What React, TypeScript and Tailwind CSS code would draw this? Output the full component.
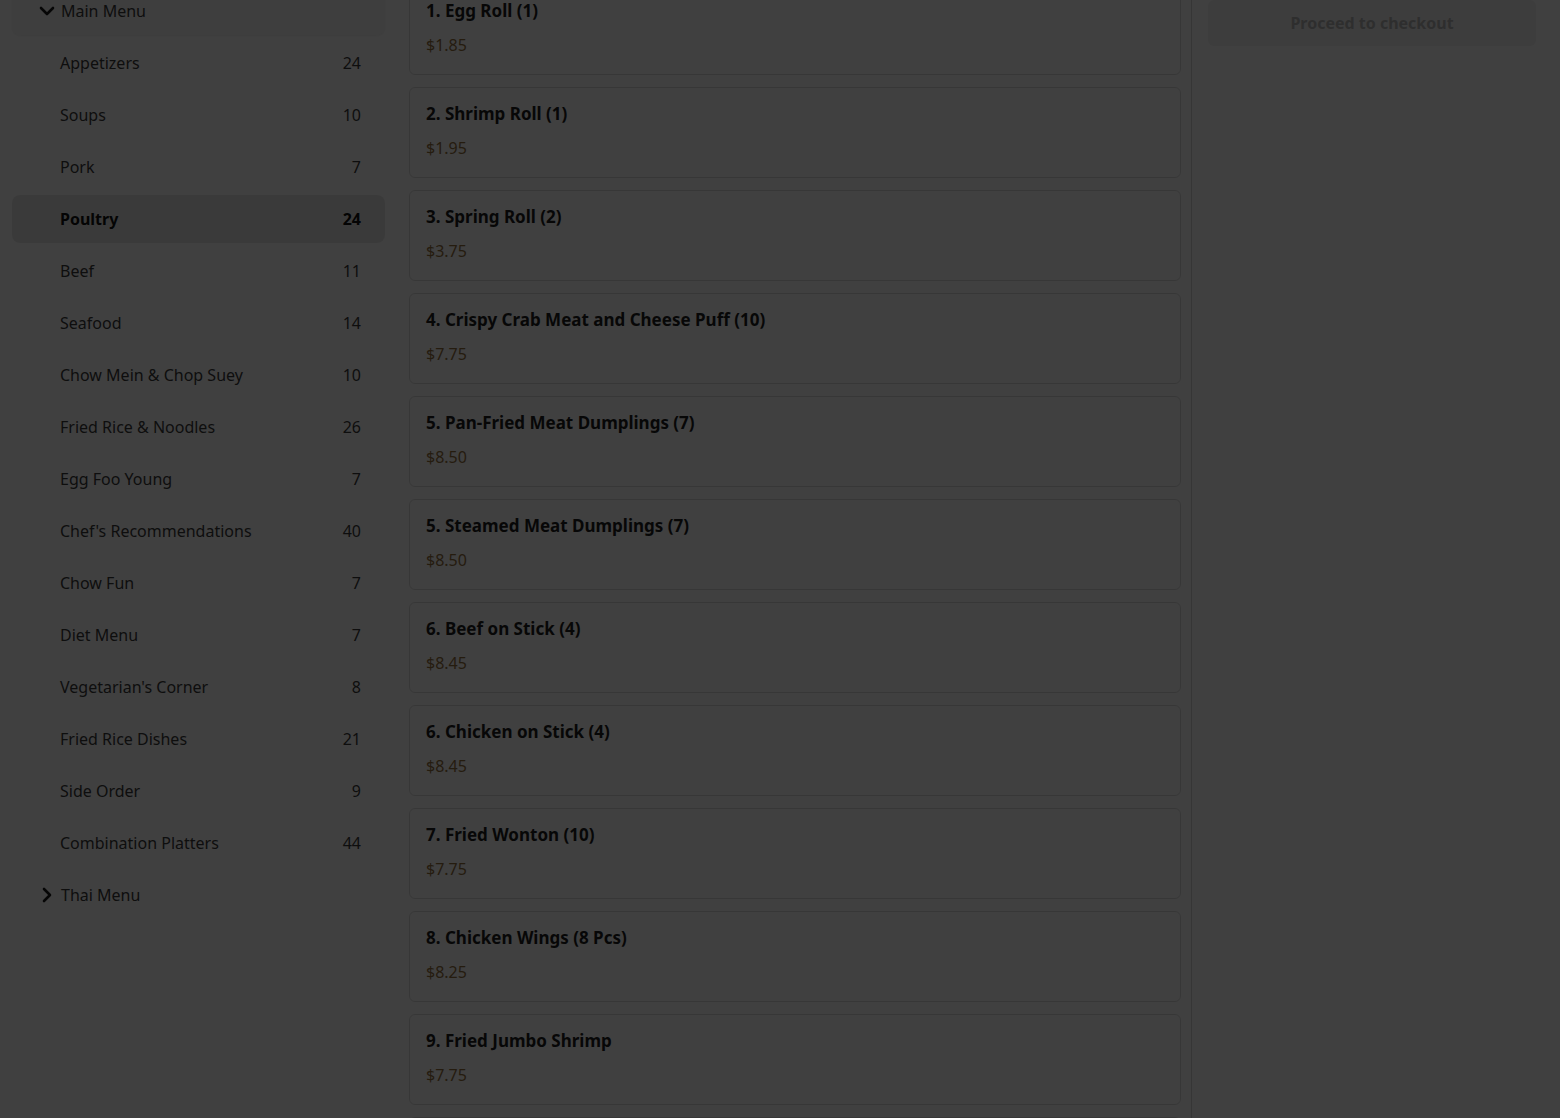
import { ChevronDown, ChevronRight } from 'lucide-react';

const categories = [
  { name: 'Appetizers', count: 24 },
  { name: 'Soups', count: 10 },
  { name: 'Pork', count: 7 },
  { name: 'Poultry', count: 24, active: true },
  { name: 'Beef', count: 11 },
  { name: 'Seafood', count: 14 },
  { name: 'Chow Mein & Chop Suey', count: 10 },
  { name: 'Fried Rice & Noodles', count: 26 },
  { name: 'Egg Foo Young', count: 7 },
  { name: "Chef's Recommendations", count: 40 },
  { name: 'Chow Fun', count: 7 },
  { name: 'Diet Menu', count: 7 },
  { name: "Vegetarian's Corner", count: 8 },
  { name: 'Fried Rice Dishes', count: 21 },
  { name: 'Side Order', count: 9 },
  { name: 'Combination Platters', count: 44 },
];

const items = [
  { name: '1. Egg Roll (1)', price: '$1.85' },
  { name: '2. Shrimp Roll (1)', price: '$1.95' },
  { name: '3. Spring Roll (2)', price: '$3.75' },
  { name: '4. Crispy Crab Meat and Cheese Puff (10)', price: '$7.75' },
  { name: '5. Pan-Fried Meat Dumplings (7)', price: '$8.50' },
  { name: '5. Steamed Meat Dumplings (7)', price: '$8.50' },
  { name: '6. Beef on Stick (4)', price: '$8.45' },
  { name: '6. Chicken on Stick (4)', price: '$8.45' },
  { name: '7. Fried Wonton (10)', price: '$7.75' },
  { name: '8. Chicken Wings (8 Pcs)', price: '$8.25' },
  { name: '9. Fried Jumbo Shrimp', price: '$7.75' },
  { name: '10. Fried Scallops (10)', price: '$8.95' },
];

const Sidebar = () => {
  return (
    <aside className="w-[373px] shrink-0 mt-[-13px] flex flex-col gap-1">
      <button className="h-12 flex items-center gap-0.5 pl-[23px] bg-[#f6f6f6] rounded-lg shadow-[0_1px_2px_rgba(0,0,0,0.06)] text-[#3a3a3a] text-base">
        <ChevronDown size={24} strokeWidth={2.6} className="text-[#1a1a1a]" />
        <span>Main Menu</span>
      </button>
      {categories.map((c) => (
        <div
          key={c.name}
          className={
            c.active
              ? 'h-12 flex items-center justify-between pl-12 pr-6 rounded-lg bg-[#e8e8e8] font-bold text-[#111]'
              : 'h-12 flex items-center justify-between pl-12 pr-6 rounded-lg text-[#3a3a3a]'
          }
        >
          <span>{c.name}</span>
          <span>{c.count}</span>
        </div>
      ))}
      <button className="h-12 flex items-center gap-0.5 pl-[23px] text-[#3a3a3a] text-base">
        <ChevronRight size={24} strokeWidth={2.6} className="text-[#1a1a1a]" />
        <span>Thai Menu</span>
      </button>
    </aside>
  );
};

const App = () => {
  return (
    <div className="relative h-screen overflow-hidden bg-white font-['Noto_Sans',sans-serif] text-base">
      <div className="flex pl-3">
        <Sidebar />
        <main className="w-[772px] shrink-0 ml-6 mt-[-16px] flex flex-col gap-3">
          {items.map((it, i) => (
            <div key={i} className="h-[91px] shrink-0 border border-[#dcdcdc] rounded-md px-4 pt-3">
              <h4 className="text-[17px] leading-7 font-bold text-[#1c1c1c]">{it.name}</h4>
              <p className="mt-2 leading-6 text-[#94703e]">{it.price}</p>
            </div>
          ))}
        </main>
        <section className="ml-[10px] flex-1 h-screen border-l border-[#d8d8d8] pl-4 pr-6">
          <button className="w-full h-[46px] rounded-md bg-[#f3f3f3] text-[#b8b8b8] font-bold text-base">
            Proceed to checkout
          </button>
        </section>
      </div>
      <div className="fixed inset-0 bg-black/75" />
    </div>
  );
};

export default App;
